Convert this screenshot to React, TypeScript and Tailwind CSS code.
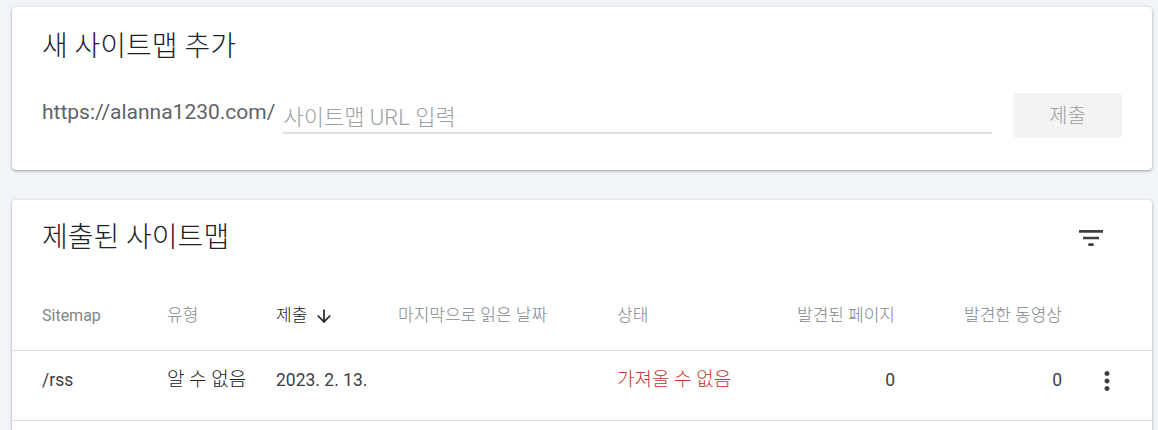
import { ArrowDown } from "lucide-react";

const font = {
  fontFamily: '"Roboto", "Noto Sans CJK KR", "Noto Sans", sans-serif',
};

function FilterIcon() {
  return (
    <svg width="32" height="32" viewBox="0 0 24 24" className="fill-[#3c4043]">
      <path d="M10 18h4v-2h-4v2zM3 6v2h18V6H3zm3 7h12v-2H6v2z" />
    </svg>
  );
}

function MoreIcon() {
  return (
    <svg width="30" height="30" viewBox="0 0 24 24" className="fill-[#3c4043]">
      <path d="M12 8c1.1 0 2-.9 2-2s-.9-2-2-2-2 .9-2 2 .9 2 2 2zm0 2c-1.1 0-2 .9-2 2s.9 2 2 2 2-.9 2-2-.9-2-2-2zm0 6c-1.1 0-2 .9-2 2s.9 2 2 2 2-.9 2-2-.9-2-2-2z" />
    </svg>
  );
}

const cardClass =
  "bg-white rounded-[4px] shadow-[0_1px_2px_rgba(60,64,67,0.3),0_1px_3px_1px_rgba(60,64,67,0.15)]";

const gridCols =
  "grid grid-cols-[125px_109px_122px_219px_143px_135px_167px_90px] pl-[30px]";

export default function App() {
  return (
    <div className="min-h-screen bg-[#f1f4f9] pl-3 pr-[6px] pt-[7px]" style={font}>
      {/* Add new sitemap */}
      <section className={`${cardClass} h-[163px] px-[30px] pt-6`}>
        <h2 className="text-[28px] leading-[32px] font-light text-[#202124]">
          새 사이트맵 추가
        </h2>
        <div className="mt-[30px] flex items-center">
          <span className="text-[21px] text-[#5f6368] pb-[6px]">
            https://alanna1230.com/
          </span>
          <div className="ml-[8px] flex-1 border-b-2 border-[#e0e0e0] pt-[8px]">
            <input
              className="w-full bg-transparent text-[22px] leading-[26px] font-light text-[#202124] outline-none placeholder:text-[#9aa0a6]"
              placeholder="사이트맵 URL 입력"
            />
          </div>
          <button className="ml-[21px] h-[45px] w-[109px] rounded-[4px] bg-[#f3f3f3] text-[20px] font-light text-[#9e9e9e]">
            제출
          </button>
        </div>
      </section>

      {/* Submitted sitemaps */}
      <section className={`${cardClass} mt-[30px] pb-2`}>
        <div className="flex items-center justify-between pl-[30px] pr-[45px] pt-[22px]">
          <h2 className="text-[28px] leading-[32px] font-light text-[#202124]">
            제출된 사이트맵
          </h2>
          <FilterIcon />
        </div>

        <div
          className={`${gridCols} mt-[26px] h-[71px] items-center border-b border-[#e0e0e0] text-[17px] font-light text-[#80868b] pt-[2px]`}
        >
          <span className="text-[16px] font-normal">Sitemap</span>
          <span>유형</span>
          <span className="flex items-center gap-[7px] text-[#202124]">
            제출
            <ArrowDown size={20} strokeWidth={2} className="text-[#202124]" />
          </span>
          <span>마지막으로 읽은 날짜</span>
          <span>상태</span>
          <span className="text-right">발견된 페이지</span>
          <span className="text-right">발견한 동영상</span>
          <span />
        </div>

        <div
          className={`${gridCols} h-[70px] items-center border-b border-[#e0e0e0] text-[17.5px] text-[#3c4043] pb-[10px]`}
        >
          <span>/rss</span>
          <span className="text-[19px] font-light text-[#202124]">알 수 없음</span>
          <span>2023. 2. 13.</span>
          <span />
          <span className="text-[19px] font-light text-[#c8372d]">가져올 수 없음</span>
          <span className="text-right">0</span>
          <span className="text-right">0</span>
          <span className="flex justify-center">
            <MoreIcon />
          </span>
        </div>
        <div className="h-[40px]" />
      </section>
    </div>
  );
}
